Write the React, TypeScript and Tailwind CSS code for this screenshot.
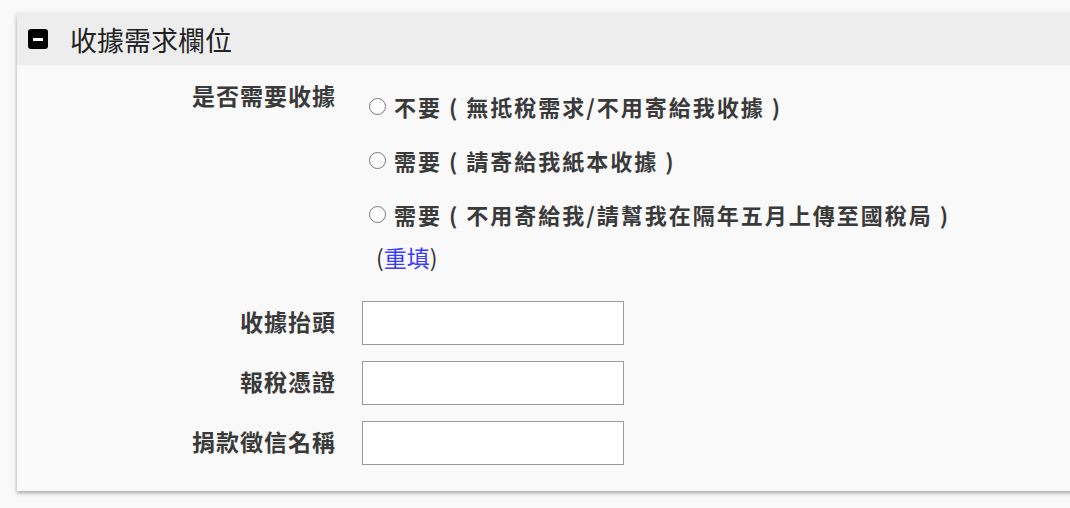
import React from "react";

const font = { fontFamily: '"Noto Sans CJK TC", "Noto Sans", sans-serif' };

const options = [
  "不要 ( 無抵稅需求/不用寄給我收據 )",
  "需要 ( 請寄給我紙本收據 )",
  "需要 ( 不用寄給我/請幫我在隔年五月上傳至國稅局 )",
];

const fields = ["收據抬頭", "報稅憑證", "捐款徵信名稱"];

function Radio({ label }: { label: string }) {
  return (
    <label className="flex h-[30px] items-center gap-[8px] text-[22px] font-bold tracking-[2px] text-[#3a3a3a]">
      <span className="h-[17px] w-[17px] shrink-0 rounded-full border border-[#767676] bg-white" />
      <span className="whitespace-pre leading-[30px]">{label}</span>
    </label>
  );
}

export default function App() {
  return (
    <div lang="zh-Hant-TW" className="min-h-[508px] overflow-hidden bg-[#f9f9f9] pl-[17px] pt-[13px]" style={font}>
      <section className="mr-[-40px] bg-[#f9f9f9] shadow-[0_2px_4px_rgba(0,0,0,0.35)]">
        <header className="flex h-[52px] items-center gap-[22px] bg-[#ededed] pl-[11px]">
          <span className="flex h-[20px] w-[20px] items-center justify-center rounded-[3px] bg-black">
            <span className="h-[3px] w-[10px] bg-white" />
          </span>
          <h2 className="text-[27px] font-normal leading-none text-[#222]">收據需求欄位</h2>
        </header>

        <div className="flex flex-col pb-[26px] pt-[15px]">
          <div className="flex gap-[26px]">
            <div className="w-[319px] shrink-0 text-right text-[23px] font-bold leading-[30px] tracking-[1px] text-[#3a3a3a]">
              是否需要收據
            </div>
            <div className="flex flex-col">
              <div className="flex flex-col gap-[24px] pl-[7px] pt-[11px]">
                {options.map((o) => (
                  <Radio key={o} label={o} />
                ))}
              </div>
              <div className="mt-[13px] pl-[14px] text-[23px] leading-[30px] text-[#333]">
                (<a href="#" className="text-[#3b3bff]">重填</a>)
              </div>
            </div>
          </div>

          <div className="mt-[29px] flex flex-col gap-[16px]">
            {fields.map((f) => (
              <div key={f} className="flex items-center gap-[26px]">
                <div className="w-[319px] shrink-0 pb-[4px] text-right text-[23px] font-bold leading-[30px] tracking-[1px] text-[#3a3a3a]">
                  {f}
                </div>
                <input
                  type="text"
                  className="h-[44px] w-[262px] border border-[#9a9a9a] bg-white px-2 text-[18px] outline-none"
                />
              </div>
            ))}
          </div>
        </div>
      </section>
    </div>
  );
}
